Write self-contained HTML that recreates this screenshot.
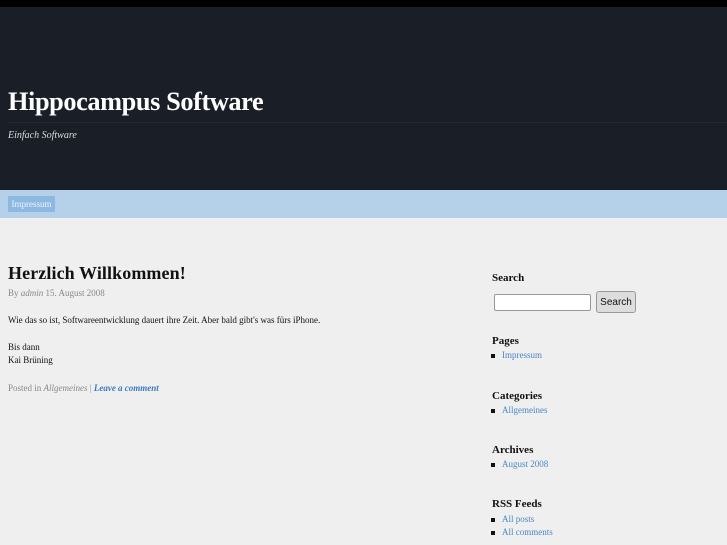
<!DOCTYPE html>
<html><head><meta charset="utf-8"><style>
*{margin:0;padding:0;box-sizing:border-box}
body{width:727px;height:545px;overflow:hidden;background:#efefef;font-family:"Liberation Serif",serif;position:relative}
.top{position:absolute;left:0;top:0;width:727px;height:7px;background:#000}
.hdr{position:absolute;left:0;top:7px;width:727px;height:183px;background:#1a1e26}
.hdr h1{position:absolute;left:8px;top:80px;color:#fff;font-size:26.3px;font-weight:bold;letter-spacing:-0.4px;white-space:nowrap}
.hdr .line{position:absolute;left:8px;top:115px;width:719px;height:1px;background:#262b33}
.hdr .tag{position:absolute;left:8px;top:123px;color:#ddd;font-size:10px;font-style:italic}
.nav{position:absolute;left:0;top:190px;width:727px;height:28px;background:#b5d1ea}
.nav span{position:absolute;left:8px;top:6px;width:47px;height:16px;background:#8db8e0;color:#eef5fc;font-size:9px;line-height:16px;text-align:center}
.a{position:absolute;white-space:nowrap}
h2{font-size:18px;font-weight:bold;color:#111;letter-spacing:0.1px}
.meta{font-size:9px;color:#888}
.p{font-size:9px;color:#111}
.sb{font-size:11px;font-weight:bold;color:#111}
.li{font-size:9px;color:#4a86c5}
.li:before{content:"";position:absolute;left:-11px;top:4px;width:4px;height:4px;background:#111}
a{color:#3a78c0}
</style></head><body>
<div class="top"></div>
<div class="hdr"><h1>Hippocampus Software</h1><div class="line"></div><div class="tag">Einfach Software</div></div>
<div class="nav"><span>Impressum</span></div>
<div class="a" style="left:8px;top:263px"><h2>Herzlich Willkommen!</h2></div>
<div class="a meta" style="left:8px;top:288px">By <i>admin</i> 15. August 2008</div>
<div class="a p" style="left:8px;top:315px">Wie das so ist, Softwareentwicklung dauert ihre Zeit. Aber bald gibt's was fürs iPhone.</div>
<div class="a p" style="left:8px;top:342px">Bis dann</div>
<div class="a p" style="left:8px;top:355px">Kai Brüning</div>
<div class="a meta" style="left:8px;top:383px">Posted in <i>Allgemeines</i> | <a style="font-weight:bold;font-style:italic;text-decoration:none">Leave a comment</a></div>
<div class="a sb" style="left:492px;top:272px">Search</div>
<div class="a" style="left:494px;top:294px;width:97px;height:17px;background:#fff;border:1px solid #999;border-radius:2px"></div>
<div class="a" style="left:596px;top:291px;width:40px;height:22px;background:#ddd;border:1px solid #999;border-radius:3px;font-family:'Liberation Sans',sans-serif;font-size:10px;line-height:21px;text-align:center;color:#111">Search</div>
<div class="a sb" style="left:492px;top:335px">Pages</div>
<div class="a li" style="left:502px;top:350px">Impressum</div>
<div class="a sb" style="left:492px;top:390px">Categories</div>
<div class="a li" style="left:502px;top:405px">Allgemeines</div>
<div class="a sb" style="left:492px;top:444px">Archives</div>
<div class="a li" style="left:502px;top:459px">August 2008</div>
<div class="a sb" style="left:492px;top:498px">RSS Feeds</div>
<div class="a li" style="left:502px;top:514px">All posts</div>
<div class="a li" style="left:502px;top:527px">All comments</div>
</body></html>
